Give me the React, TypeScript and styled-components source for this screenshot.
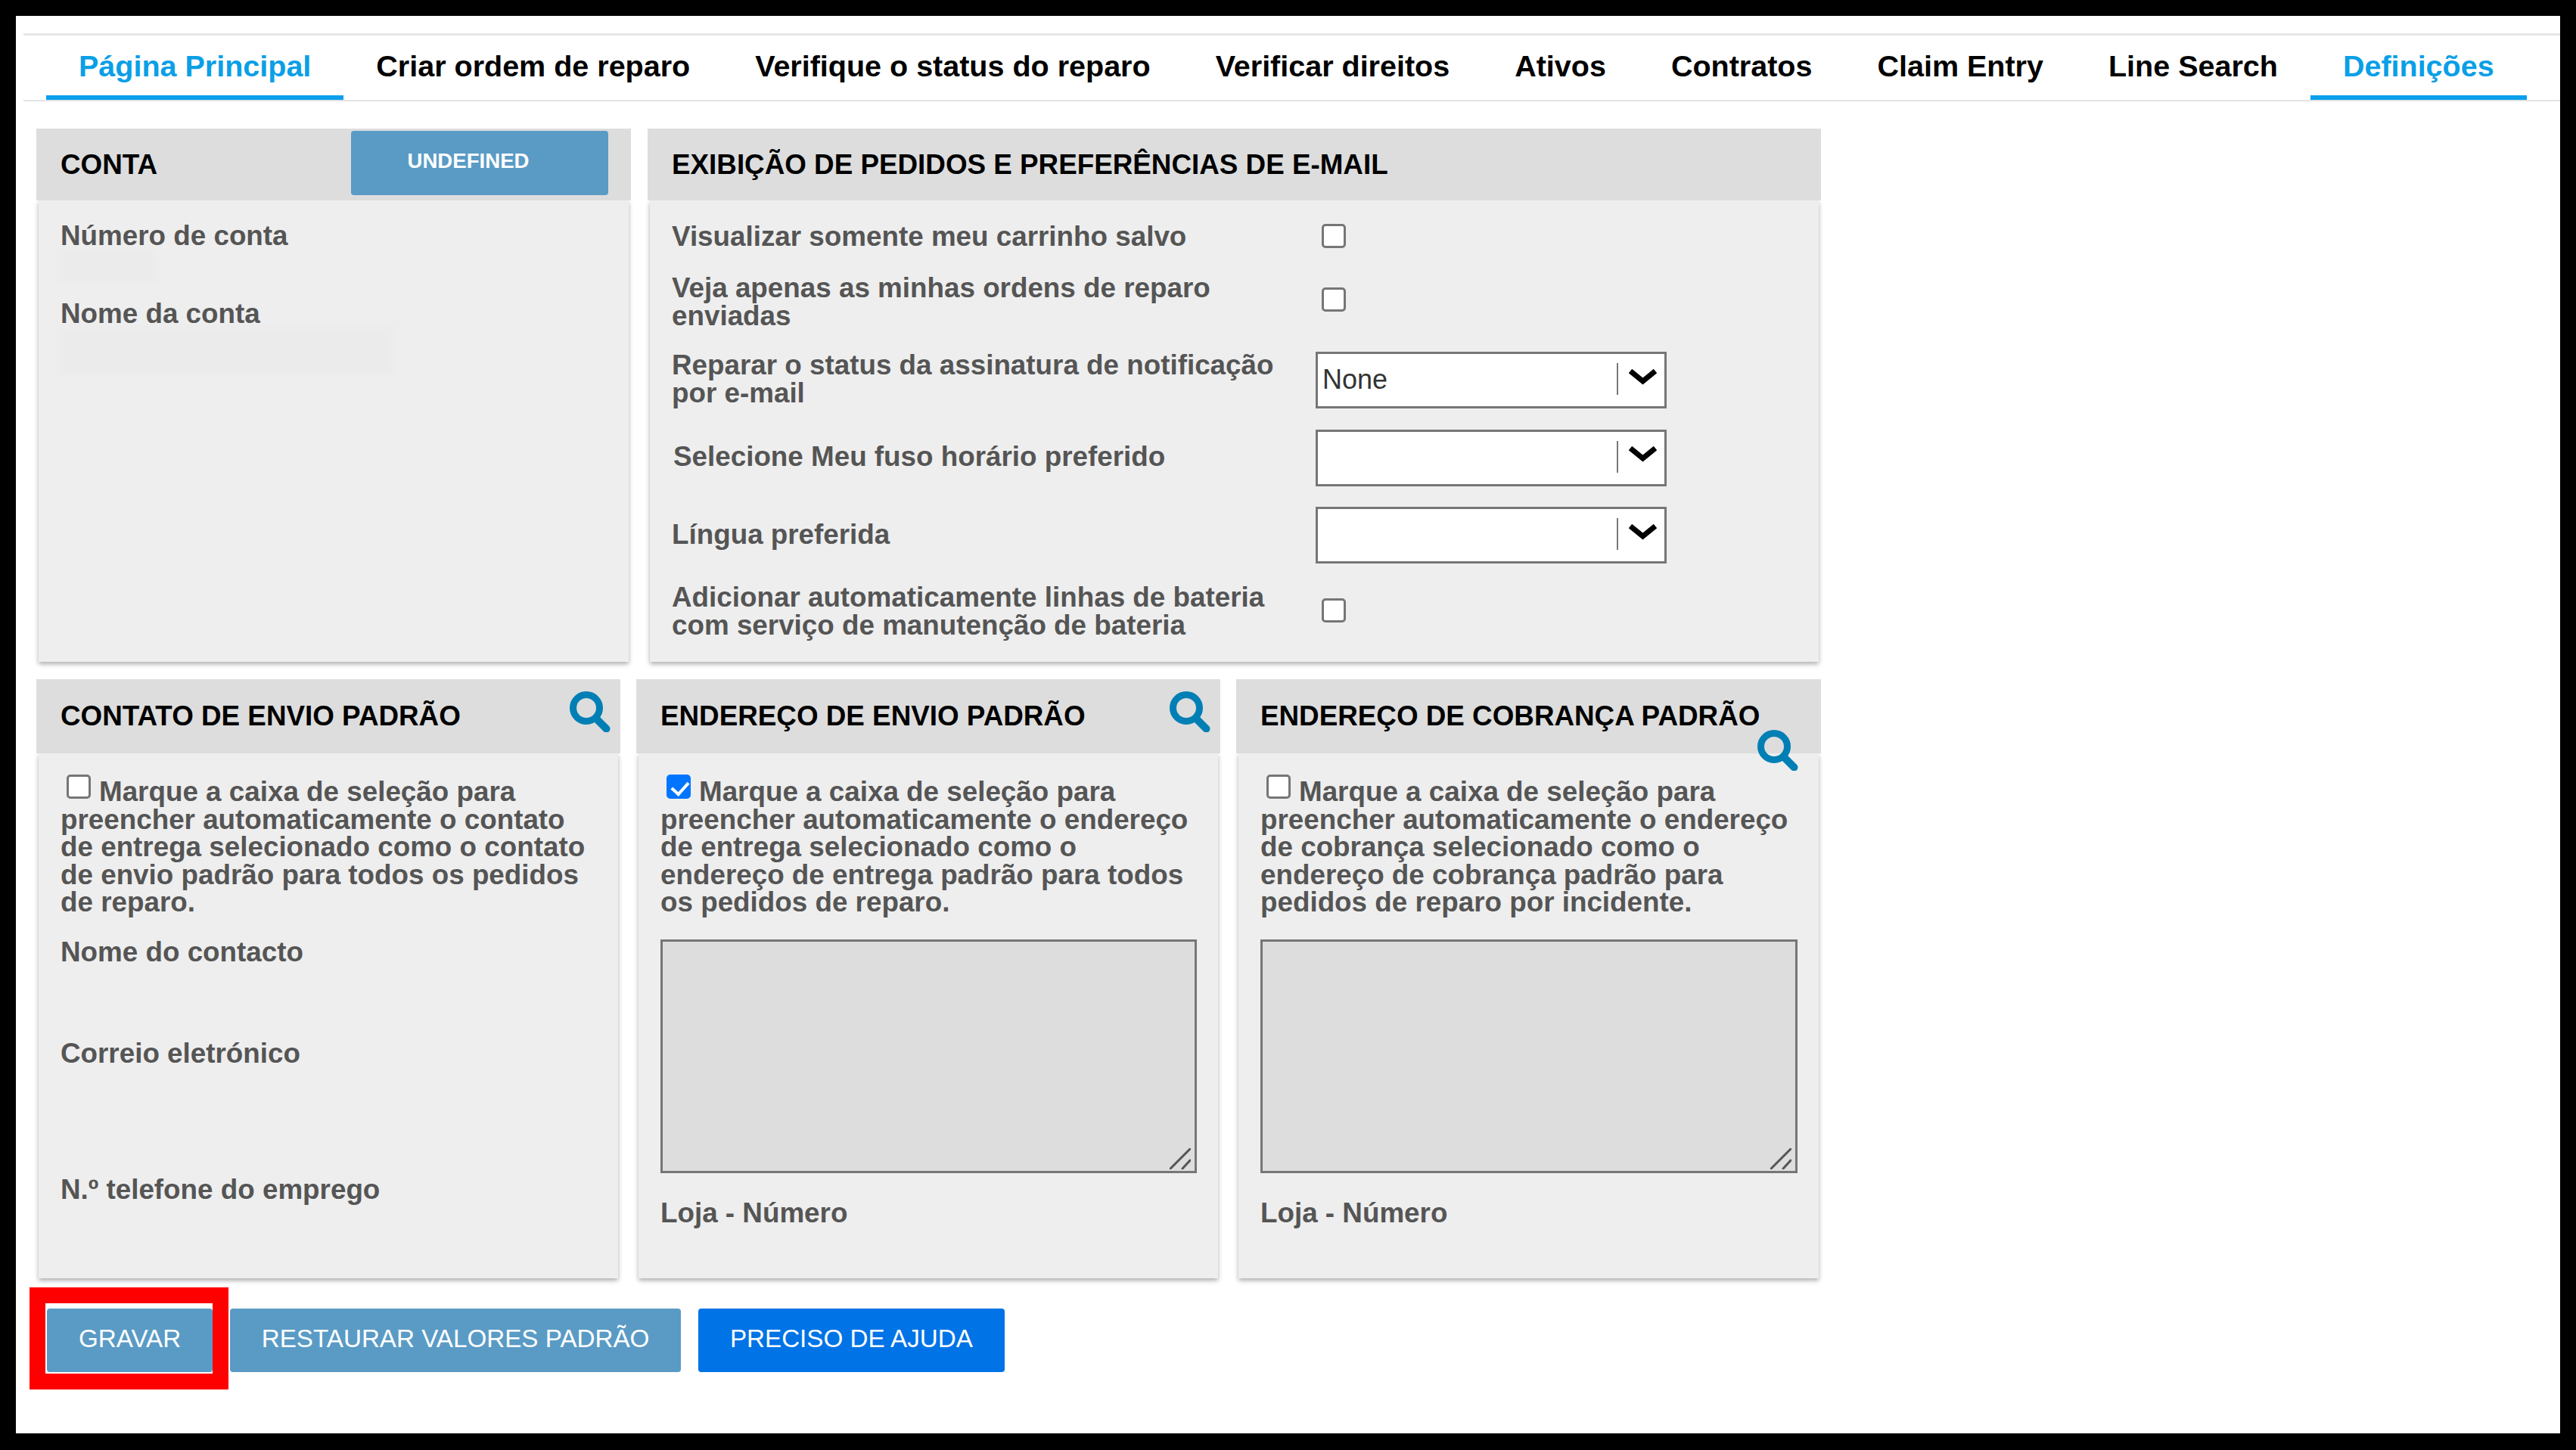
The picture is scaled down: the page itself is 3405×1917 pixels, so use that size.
import React from "react";
import styled, { createGlobalStyle } from "styled-components";

const Global = createGlobalStyle`
  html, body { margin: 0; padding: 0; background: #000; }
  body { font-family: "Liberation Sans", Arial, sans-serif; overflow: hidden; }
  * { box-sizing: border-box; }
`;

const Screen = styled.div`
  width: 3405px;
  height: 1917px;
  background: #000;
  padding: 21px 21px 22px 21px;
`;

const Frame = styled.div`
  height: 100%;
  background: #fff;
  padding-top: 23px;
`;

const Nav = styled.nav`
  display: flex;
  height: 90px;
  margin-left: 10px;
  padding-left: 30px;
  border-top: 3px solid #e6e6e6;
  border-bottom: 2px solid #e3e3e3;
`;

const Tab = styled.a<{ $active?: boolean }>`
  display: flex;
  align-items: center;
  height: 85px;
  padding: 2px 43px 0;
  font-size: 39.5px;
  font-weight: 700;
  white-space: nowrap;
  color: ${(p) => (p.$active ? "#0a9fe6" : "#000")};
  border-bottom: 6px solid ${(p) => (p.$active ? "#0a9fec" : "transparent")};
`;

const Content = styled.main`
  width: 2360px;
  margin: 36px 0 0 27px;
`;

const TopRow = styled.div`
  display: grid;
  grid-template-columns: 786px 1551px;
  column-gap: 22px;
  height: 705px;
`;

const BottomRow = styled.div`
  display: grid;
  grid-template-columns: 772px 772px 773px;
  column-gap: 21px;
  height: 792px;
  margin-top: 23px;
`;

const Panel = styled.section`
  position: relative;
  display: flex;
  flex-direction: column;
  min-width: 0;
`;

const PanelHeader = styled.header<{ $h: number }>`
  position: relative;
  z-index: 1;
  display: flex;
  align-items: center;
  height: ${(p) => p.$h}px;
  padding-left: 32px;
  background: #ddd;
`;

const PanelTitle = styled.h2`
  margin: 0;
  font-size: 36.8px;
  font-weight: 700;
  color: #000;
  white-space: nowrap;
`;

const PanelBody = styled.div<{ $pt: number }>`
  flex: 1;
  margin: 0 3px;
  padding: ${(p) => p.$pt}px 28px 0 29px;
  background: #eee;
  color: #555;
  font-size: 36.8px;
  font-weight: 700;
  line-height: 36.5px;
  box-shadow: 0 3px 6px rgba(0, 0, 0, 0.32);
`;

const UndefinedButton = styled.button`
  position: absolute;
  top: 2.5px;
  right: 30px;
  width: 340px;
  height: 85px;
  padding: 0 30px 5px 0;
  border: 0;
  border-radius: 4px;
  background: #5a9bc5;
  color: #fff;
  font-family: inherit;
  font-size: 27.6px;
  font-weight: 700;
`;

const Label = styled.div<{ $mt?: number }>`
  margin-top: ${(p) => p.$mt ?? 0}px;
`;

const Redacted = styled.div<{ $w: number; $h: number }>`
  width: ${(p) => p.$w}px;
  height: ${(p) => p.$h}px;
  background: #ebebeb;
  filter: blur(2px);
`;

const PrefList = styled.div`
  display: flex;
  flex-direction: column;
  row-gap: 27.5px;
`;

const PrefRow = styled.div<{ $h: number }>`
  display: flex;
  align-items: center;
  height: ${(p) => p.$h}px;
`;

const PrefLabel = styled.div<{ $indent?: boolean; $raise?: boolean }>`
  flex: none;
  width: 851px;
  padding-right: 21px;
  padding-left: ${(p) => (p.$indent ? 2 : 0)}px;
  padding-bottom: ${(p) => (p.$raise ? 3 : 0)}px;
  line-height: 37px;
`;

const Check = styled.input.attrs({ type: "checkbox" })`
  appearance: none;
  position: relative;
  flex: none;
  width: 32px;
  height: 32px;
  margin: 0;
  border: 3px solid #767676;
  border-radius: 5px;
  background: #fff;

  &:checked {
    border-color: #0075ff;
    background: #0075ff;
  }

  &:checked::after {
    content: "";
    position: absolute;
    left: 8px;
    top: 2px;
    width: 10px;
    height: 18px;
    border: solid #fff;
    border-width: 0 4px 4px 0;
    transform: rotate(42deg);
  }
`;

const PrefCheck = styled(Check)<{ $lift?: number }>`
  margin: 0 0 ${(p) => p.$lift ?? 0}px 8px;
`;

const SelectBox = styled.div`
  display: flex;
  align-items: center;
  width: 464px;
  height: 75px;
  padding: 0 9px 0 6px;
  border: 3px solid #767676;
  background: #fff;
  color: #333;
  font-size: 36px;
  font-weight: 400;
`;

const SelectValue = styled.span`
  flex: 1;
`;

const SelectDivider = styled.span`
  width: 2px;
  height: 42px;
  margin: 0 13px 3px 0;
  background: #777;
`;

const Chevron = styled.svg`
  width: 39px;
  height: 21px;
  margin-bottom: 9px;
`;

const Notice = styled.p`
  margin: 0;
`;

const InlineCheck = styled(Check)`
  vertical-align: top;
  margin: -5px 11px 0 8px;
`;

const SearchIcon = styled.svg<{ $top: number; $right: number }>`
  position: absolute;
  z-index: 2;
  top: ${(p) => p.$top}px;
  right: ${(p) => p.$right}px;
  width: 54px;
  height: 54px;
`;

const AddressWrap = styled.div`
  position: relative;
  height: 309px;
  margin-top: 30px;
`;

const AddressArea = styled.textarea`
  display: block;
  width: 100%;
  height: 100%;
  border: 3px solid #767676;
  background: #ddd;
  resize: none;
`;

const Grip = styled.svg`
  position: absolute;
  right: 8px;
  bottom: 5px;
  width: 28px;
  height: 28px;
`;

const ButtonRow = styled.div`
  display: flex;
  column-gap: 22.5px;
  margin: 40px 0 0 14px;
`;

const Action = styled.button<{ $primary?: boolean }>`
  height: 84px;
  padding: 0 42px 5px;
  border: 0;
  border-radius: 4px;
  background: ${(p) => (p.$primary ? "#0073e6" : "#5a9bc5")};
  color: #fff;
  font-family: inherit;
  font-size: 33.2px;
  font-weight: 400;
  white-space: nowrap;
`;

const Highlighted = styled.div`
  position: relative;
  &::after {
    content: "";
    position: absolute;
    top: -28px;
    left: -23px;
    right: -21px;
    bottom: -23px;
    border: 21px solid #f00;
    pointer-events: none;
  }
`;

const tabs = [
  ["Página Principal", true],
  ["Criar ordem de reparo", false],
  ["Verifique o status do reparo", false],
  ["Verificar direitos", false],
  ["Ativos", false],
  ["Contratos", false],
  ["Claim Entry", false],
  ["Line Search", false],
  ["Definições", true],
] as const;

const Search = ({ top, right }: { top: number; right: number }) => (
  <SearchIcon $top={top} $right={right} viewBox="0 0 54 54" aria-hidden>
    <circle cx="22" cy="22" r="17.5" fill="none" stroke="#007fb5" strokeWidth="9" />
    <line x1="35" y1="36" x2="48.5" y2="49.5" stroke="#007fb5" strokeWidth="10" strokeLinecap="round" />
  </SearchIcon>
);

const Select = ({ value }: { value?: string }) => (
  <SelectBox>
    <SelectValue>{value}</SelectValue>
    <SelectDivider />
    <Chevron viewBox="0 0 39 21" aria-hidden>
      <polyline points="3,2.5 19.5,16 36,2.5" fill="none" stroke="#000" strokeWidth="7" />
    </Chevron>
  </SelectBox>
);

const Address = () => (
  <AddressWrap>
    <AddressArea readOnly />
    <Grip viewBox="0 0 28 28" aria-hidden>
      <line x1="1" y1="27" x2="27" y2="1" stroke="#555" strokeWidth="3" strokeLinecap="round" />
      <line x1="17" y1="27" x2="27" y2="16" stroke="#555" strokeWidth="3" strokeLinecap="round" />
    </Grip>
  </AddressWrap>
);

export default function App() {
  return (
    <>
      <Global />
      <Screen>
        <Frame>
          <Nav>
            {tabs.map(([label, active]) => (
              <Tab key={label} $active={active}>
                {label}
              </Tab>
            ))}
          </Nav>
          <Content>
            <TopRow>
              <Panel>
                <PanelHeader $h={95}>
                  <PanelTitle>CONTA</PanelTitle>
                  <UndefinedButton>UNDEFINED</UndefinedButton>
                </PanelHeader>
                <PanelBody $pt={29}>
                  <Label>Número de conta</Label>
                  <Redacted $w={125} $h={42} />
                  <Label $mt={24}>Nome da conta</Label>
                  <Redacted $w={440} $h={61} />
                </PanelBody>
              </Panel>
              <Panel>
                <PanelHeader $h={95}>
                  <PanelTitle>EXIBIÇÃO DE PEDIDOS E PREFERÊNCIAS DE E-MAIL</PanelTitle>
                </PanelHeader>
                <PanelBody $pt={26}>
                  <PrefList>
                    <PrefRow $h={42}>
                      <PrefLabel>Visualizar somente meu carrinho salvo</PrefLabel>
                      <PrefCheck />
                    </PrefRow>
                    <PrefRow $h={77}>
                      <PrefLabel>Veja apenas as minhas ordens de reparo enviadas</PrefLabel>
                      <PrefCheck $lift={6} />
                    </PrefRow>
                    <PrefRow $h={75}>
                      <PrefLabel $raise>Reparar o status da assinatura de notificação por e-mail</PrefLabel>
                      <Select value="None" />
                    </PrefRow>
                    <PrefRow $h={75}>
                      <PrefLabel $indent $raise>Selecione Meu fuso horário preferido</PrefLabel>
                      <Select />
                    </PrefRow>
                    <PrefRow $h={75}>
                      <PrefLabel $raise>Língua preferida</PrefLabel>
                      <Select />
                    </PrefRow>
                    <PrefRow $h={74}>
                      <PrefLabel $raise>Adicionar automaticamente linhas de bateria com serviço de manutenção de bateria</PrefLabel>
                      <PrefCheck $lift={6} />
                    </PrefRow>
                  </PrefList>
                </PanelBody>
              </Panel>
            </TopRow>
            <BottomRow>
              <Panel>
                <PanelHeader $h={98}>
                  <PanelTitle>CONTATO DE ENVIO PADRÃO</PanelTitle>
                </PanelHeader>
                <Search top={16} right={13} />
                <PanelBody $pt={33}>
                  <Notice>
                    <InlineCheck />
                    Marque a caixa de seleção para preencher automaticamente o contato de entrega selecionado como o contato de envio padrão para todos os pedidos de reparo.
                  </Notice>
                  <Label $mt={29}>Nome do contacto</Label>
                  <Label $mt={98}>Correio eletrónico</Label>
                  <Label $mt={143}>N.º telefone do emprego</Label>
                </PanelBody>
              </Panel>
              <Panel>
                <PanelHeader $h={98}>
                  <PanelTitle>ENDEREÇO DE ENVIO PADRÃO</PanelTitle>
                </PanelHeader>
                <Search top={16} right={13} />
                <PanelBody $pt={33}>
                  <Notice>
                    <InlineCheck defaultChecked />
                    Marque a caixa de seleção para preencher automaticamente o endereço de entrega selecionado como o endereço de entrega padrão para todos os pedidos de reparo.
                  </Notice>
                  <Address />
                  <Label $mt={35}>Loja - Número</Label>
                </PanelBody>
              </Panel>
              <Panel>
                <PanelHeader $h={98}>
                  <PanelTitle>ENDEREÇO DE COBRANÇA PADRÃO</PanelTitle>
                </PanelHeader>
                <Search top={67} right={30} />
                <PanelBody $pt={33}>
                  <Notice>
                    <InlineCheck />
                    Marque a caixa de seleção para preencher automaticamente o endereço de cobrança selecionado como o endereço de cobrança padrão para pedidos de reparo por incidente.
                  </Notice>
                  <Address />
                  <Label $mt={35}>Loja - Número</Label>
                </PanelBody>
              </Panel>
            </BottomRow>
            <ButtonRow>
              <Highlighted>
                <Action>GRAVAR</Action>
              </Highlighted>
              <Action>RESTAURAR VALORES PADRÃO</Action>
              <Action $primary>PRECISO DE AJUDA</Action>
            </ButtonRow>
          </Content>
        </Frame>
      </Screen>
    </>
  );
}
